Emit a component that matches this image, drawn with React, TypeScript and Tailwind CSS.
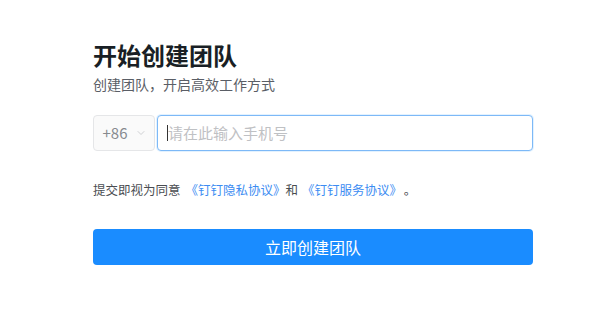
import { ChevronDown } from "lucide-react"

export default function App() {
  return (
    <div
      className="w-[600px] h-[311px] bg-white pl-[93px] pt-[39px]"
      style={{ fontFamily: '"Noto Sans CJK SC", "Noto Sans", sans-serif' }}
    >
      <div className="w-[440px]">
        <h1 className="text-[24px] leading-[32px] font-bold text-[#191f25]">开始创建团队</h1>
        <p className="mt-[3px] text-[14px] leading-[20px] text-[#5a5e66]">创建团队，开启高效工作方式</p>

        <div className="mt-[21px] flex h-[36px] gap-[2px]">
          <div className="flex w-[62px] items-center justify-center gap-[8px] pl-[2px] rounded-[4px] border border-[#e5e6e8] bg-[#fafafa] text-[15px] text-[#878a8f]">
            <span>+86</span>
            <ChevronDown className="h-[12px] w-[12px] text-[#c0c2c5]" strokeWidth={1.5} />
          </div>
          <div className="flex flex-1 items-center rounded-[4px] border border-[#7db9f7] bg-white px-[9px] shadow-[0_0_0_1px_rgba(24,144,255,0.12)]">
            <span className="h-[16px] w-px bg-[#333]" />
            <span className="text-[15px] text-[#bfc1c4]">请在此输入手机号</span>
          </div>
        </div>

        <p className="mt-[29px] text-[12.5px] leading-[20px] text-[#4a4d52]">
          提交即视为同意<span className="ml-[5px] text-[#3c8cf2]">《钉钉隐私协议》</span>
          <span className="ml-[0px]">和</span>
          <span className="ml-[4px] text-[#3c8cf2]">《钉钉服务协议》</span>
          <span className="ml-[8px]">。</span>
        </p>

        <button className="mt-[29px] flex h-[36px] w-full items-center justify-center rounded-[4px] bg-[#1a8cff] text-[16px] text-white">
          立即创建团队
        </button>
      </div>
    </div>
  )
}
